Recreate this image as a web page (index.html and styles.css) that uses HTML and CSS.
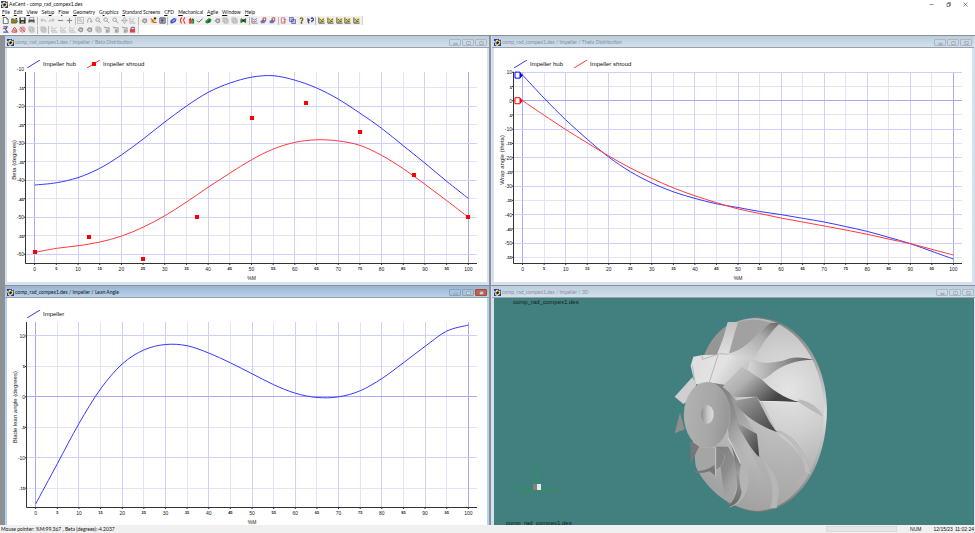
FILE: index.html
```html
<!DOCTYPE html>
<html lang="en">
<head>
<meta charset="utf-8">
<title>AxCent - comp_rad_compex1.des</title>
<link rel="stylesheet" href="styles.css">
</head>
<body>
<svg class="defs" aria-hidden="true">
  <symbol id="app" viewBox="0 0 16 16"><path fill="#2433b8" d="M0 0h16v16H0z"/><path fill="#f4e63a" d="M4 3l4-2 2 3 5 1-1 5-3 4-4-1-5 1 1-5z"/><path fill="#fff" d="M0 5h3v3H0zM12 0h3v3h-3zM5 14h4v2H5z"/><path fill="#111a50" d="M8 5l4 2-2 4-4 1-1-4z"/></symbol>
  <symbol id="new" viewBox="0 0 16 16"><path fill="#fff" stroke="#333" stroke-width="1.5" d="M3 1h7l4 4v10H3z"/><path fill="none" stroke="#333" d="M10 1v4h4"/></symbol>
  <symbol id="open" viewBox="0 0 16 16"><path fill="#8a8418" stroke="#333" d="M1 14V4h5l1 2h6v3h3l-4 5z"/><path fill="#333" d="M9 2h5v3h-2z"/></symbol>
  <symbol id="save" viewBox="0 0 16 16"><path fill="#2b2b22" d="M1 1h14v14H1z"/><path fill="#e8e8e0" d="M4 1h8v6H4z"/><path fill="#aaa" d="M5 10h6v5H5z"/></symbol>
  <symbol id="print" viewBox="0 0 16 16"><path fill="#fff" stroke="#444" d="M4 1h9v6H4z"/><path fill="#555" d="M1 6h14v7H1z"/><path fill="#ddd" d="M4 11h8v4H4z"/></symbol>
  <symbol id="undo" viewBox="0 0 16 16"><path fill="none" stroke="#aaa" stroke-width="2" d="M3 7h7q4 0 3 4M6 4L2 7l4 4"/></symbol>
  <symbol id="redo" viewBox="0 0 16 16"><path fill="none" stroke="#aaa" stroke-width="2" d="M13 7H6q-4 0-3 4M10 4l4 3-4 4"/></symbol>
  <symbol id="minus" viewBox="0 0 16 16"><path stroke="#888" stroke-width="2.5" d="M2 8h12"/></symbol>
  <symbol id="plus" viewBox="0 0 16 16"><path stroke="#888" stroke-width="2.5" d="M2 8h12M8 2v12"/></symbol>
  <symbol id="zoombox" viewBox="0 0 16 16"><g fill="none" stroke="#aaa" stroke-width="1.5"><path d="M1 1h14v14H1z"/><circle cx="7" cy="7" r="3"/><path d="M9 9l5 5"/></g></symbol>
  <symbol id="zoom" viewBox="0 0 16 16"><g fill="none" stroke="#999" stroke-width="2"><circle cx="6" cy="6" r="4"/><path d="M9 9l5 5"/></g></symbol>
  <symbol id="turn" viewBox="0 0 16 16"><path fill="none" stroke="#999" stroke-width="2" d="M4 13V7a4 4 0 018 0v4M9 9l3 3 3-3"/></symbol>
  <symbol id="move" viewBox="0 0 16 16"><path fill="none" stroke="#999" stroke-width="1.5" d="M8 1l5 7-5 7-5-7zM1 8h14"/></symbol>
  <symbol id="graph" viewBox="0 0 16 16"><path fill="none" stroke="#aaa" stroke-width="1.5" d="M2 1v13h13M4 4l4 3 5-4M4 10l8 1"/></symbol>
  <symbol id="geom" viewBox="0 0 16 16"><path fill="#999" d="M1 9l5-6 8 1v8l-6 3z"/><path fill="#ddd" d="M5 8l5-2 1 5H7z"/></symbol>
  <symbol id="tool" viewBox="0 0 16 16"><path fill="#e7b921" d="M1 10l9-9 5 3-9 10z"/><path fill="none" stroke="#c22" stroke-width="2" d="M2 3l7 10 6-1"/><path fill="#225" d="M9 1h5v4H9z"/></symbol>
  <symbol id="sheet" viewBox="0 0 16 16"><path fill="#d8d8e8" stroke="#446" stroke-width="2" d="M2 2h12v12H2z"/><path stroke="#335" stroke-width="1.5" d="M4 5h8M4 8h8M5 11h6M7 3v10"/></symbol>
  <symbol id="block" viewBox="0 0 16 16"><path fill="#3b56c9" d="M1 8l8-6 6 2-2 7-8 4-4-1z"/><path fill="#9fb0f0" d="M4 9l7-4 2 1-6 5z"/></symbol>
  <symbol id="blades" viewBox="0 0 16 16"><path fill="none" stroke="#e33" stroke-width="2.5" d="M7 1Q0 6 6 15M14 1Q7 6 14 15"/></symbol>
  <symbol id="pair" viewBox="0 0 16 16"><path fill="#d22" d="M2 6l4-5 2 5v9H2z"/><path fill="#187a28" d="M8 6l3-4 3 4v9H8z"/><path stroke="#fff" d="M4 8v5M11 8v5"/></symbol>
  <symbol id="check" viewBox="0 0 16 16"><path fill="none" stroke="#555" stroke-width="2" d="M2 8l4 4 9-8"/></symbol>
  <symbol id="green" viewBox="0 0 16 16"><path fill="#27953a" d="M1 9l8-7 6 3-2 7-8 3-4-2z"/><path fill="#1c5b2a" d="M6 9l6-4-1 6-5 3z"/></symbol>
  <symbol id="flow" viewBox="0 0 16 16"><path fill="#24803b" d="M1 4l6 2 7-4v12l-6-3-7 3z"/><path stroke="#b33" stroke-width="2" d="M3 3l10 9"/><path fill="#222" d="M6 6h4v4H6z"/></symbol>
  <symbol id="plot" viewBox="0 0 16 16"><path fill="none" stroke="#555" stroke-width="1.5" d="M2 1v13h13"/><path fill="none" stroke="#44c" stroke-width="1.5" d="M3 4l5 3 6-4"/><path fill="none" stroke="#c33" stroke-width="1.5" d="M3 10l6 1 5-3"/></symbol>
  <symbol id="rblue" viewBox="0 0 16 16"><path fill="#6878c4" d="M1 9l7-4 5 4-3 5H2z"/><path fill="none" stroke="#c33" stroke-width="2" d="M7 9V2h6v8"/></symbol>
  <symbol id="export" viewBox="0 0 16 16"><path fill="#fff" stroke="#b44" stroke-width="1.5" d="M3 2h8v12H3z"/><path stroke="#b44" stroke-width="1.5" d="M8 6h6M6 11h7"/></symbol>
  <symbol id="copy" viewBox="0 0 16 16"><path fill="#c5c5df" stroke="#449" stroke-width="1.5" d="M1 1h9v9H1zM6 6h9v9H6z"/></symbol>
  <symbol id="help" viewBox="0 0 16 16"><path fill="none" stroke="#786f00" stroke-width="3" d="M5 5q0-3 3-3t3 3-3 4v2"/><path fill="#333" d="M6 12h4v3H6z"/></symbol>
  <symbol id="what" viewBox="0 0 16 16"><path fill="#445" d="M1 1l7 7-4 1 2 5-3 1-2-5z"/><path fill="none" stroke="#229" stroke-width="2.5" d="M9 4q3-4 5 0t-3 5v3"/></symbol>
  <symbol id="view" viewBox="0 0 16 16"><path fill="#f4ea58" d="M1 2h14v13H1z"/><path fill="none" stroke="#448" stroke-width="2" d="M2 1v13h13M4 5l4 3 6-4M5 12l9-3"/></symbol>
  <symbol id="figure" viewBox="0 0 16 16"><path fill="none" stroke="#55b" stroke-width="2.5" d="M3 2h9L8 8l5 6H3"/><path stroke="#c33" stroke-width="2" d="M2 6h9"/></symbol>
  <symbol id="red" viewBox="0 0 16 16"><path fill="#eecaca" stroke="#d33" stroke-width="2" d="M2 12L8 3l5 6v5H3z"/><path stroke="#666" stroke-width="2" d="M6 9l6 3"/></symbol>
  <symbol id="ring" viewBox="0 0 16 16"><g fill="none" stroke="#c44" stroke-width="1.5"><circle cx="8" cy="8" r="6"/><circle cx="8" cy="8" r="3"/><path d="M2 2l12 12"/></g></symbol>
  <symbol id="grid" viewBox="0 0 16 16"><path fill="#ddd" stroke="#aaa" stroke-width="1.5" d="M2 2h9v9H2zM5 5h9v9H5z"/></symbol>
  <symbol id="wedge" viewBox="0 0 16 16"><path fill="#e2e2e2" stroke="#777" stroke-width="1.5" d="M2 2l5 2h7v10H6"/><path fill="#999" d="M7 8h5v5H7z"/></symbol>
  <symbol id="lock" viewBox="0 0 16 16"><path fill="none" stroke="#44a" stroke-width="2" d="M5 8V3h7v5"/><path fill="#d44" d="M2 7h12v8H2z"/></symbol>
</svg>

<div class="app">
  <header class="caption">
    <svg class="app-icon" aria-hidden="true"><use href="#app"/></svg>
    <h1>AxCent - comp_rad_compex1.des</h1>
    <div class="caption-buttons">
      <button aria-label="Minimize"><svg viewBox="0 0 10 10"><path d="M1 5h8"/></svg></button>
      <button aria-label="Restore"><svg viewBox="0 0 10 10"><path d="M2 3h5v6H2zM4 3V1h5v6H7"/></svg></button>
      <button aria-label="Close"><svg viewBox="0 0 10 10"><path d="M1 1l8 8M9 1L1 9"/></svg></button>
    </div>
  </header>

  <nav class="menu" aria-label="Main menu">
    <button><u>F</u>ile</button><button><u>E</u>dit</button><button><u>V</u>iew</button><button>Set<u>u</u>p</button><button>F<u>l</u>ow</button><button><u>G</u>eometry</button><button>G<u>r</u>aphics</button><button><u>S</u>tandard Screens</button><button><u>C</u>FD</button><button><u>M</u>echanical</button><button><u>A</u>gile</button><button><u>W</u>indow</button><button><u>H</u>elp</button>
  </nav>

  <div class="toolbar toolbar-main" role="toolbar" aria-label="Standard" data-icons="new open save print | undo redo minus plus | zoombox turn zoom zoom zoom move graph | geom tool sheet | block blades pair check green geom grid grid flow | plot rblue rblue | export copy help what | view view view view view"></div>
  <div class="toolbar toolbar-geometry" role="toolbar" aria-label="Geometry" data-icons="figure red ring grid | grid | graph graph graph geom geom grid wedge wedge wedge lock"></div>

  <main class="mdi">
    <section class="window">
      <header class="window-title">
        <svg class="app-icon" aria-hidden="true"><use href="#app"/></svg>
        <h2>comp_rad_compex1.des / Impeller / Beta Distribution</h2>
        <div class="window-buttons"></div>
      </header>
      <div class="window-body chart" data-chart="beta"></div>
    </section>

    <section class="window window-right">
      <header class="window-title">
        <svg class="app-icon" aria-hidden="true"><use href="#app"/></svg>
        <h2>comp_rad_compex1.des / Impeller / Theta Distribution</h2>
        <div class="window-buttons"></div>
      </header>
      <div class="window-body chart" data-chart="theta"></div>
    </section>

    <section class="window window-low window-active">
      <header class="window-title">
        <svg class="app-icon" aria-hidden="true"><use href="#app"/></svg>
        <h2>comp_rad_compex1.des / Impeller / Lean Angle</h2>
        <div class="window-buttons"></div>
      </header>
      <div class="window-body chart" data-chart="lean"></div>
    </section>

    <section class="window window-right window-low window-flush">
      <header class="window-title">
        <svg class="app-icon" aria-hidden="true"><use href="#app"/></svg>
        <h2>comp_rad_compex1.des / Impeller / 3D</h2>
        <div class="window-buttons"></div>
      </header>
      <div class="window-body scene">
        <svg viewBox="0 0 480 227" role="img" aria-label="Impeller model">
          <defs>
            <radialGradient id="disk" gradientUnits="userSpaceOnUse" cx="385" cy="270" r="370"><stop offset="0" stop-color="#e4e4e4"/><stop offset=".35" stop-color="#cfcfcf"/><stop offset=".7" stop-color="#b2b2b2"/><stop offset="1" stop-color="#a2a2a2"/></radialGradient>
            <linearGradient id="rim" x2="0" y2="1"><stop offset="0" stop-color="#7c7c7c"/><stop offset=".25" stop-color="#aaa"/><stop offset=".5" stop-color="#ddd"/><stop offset="1" stop-color="#777"/></linearGradient>
            <linearGradient id="nose" x2="1" y2=".2"><stop offset="0" stop-color="#b3b3b3"/><stop offset=".7" stop-color="#a6a6a6"/><stop offset="1" stop-color="#989898"/></linearGradient>
            <linearGradient id="bore"><stop offset="0" stop-color="#8c8c8c"/><stop offset=".55" stop-color="#c8c8c8"/><stop offset="1" stop-color="#dcdcdc"/></linearGradient>
            <linearGradient id="hub" x2="1" y2=".3"><stop offset="0" stop-color="#ddd"/><stop offset=".5" stop-color="#e3e3e3"/><stop offset="1" stop-color="#b9b9b9"/></linearGradient>
            <linearGradient id="bladeA" x2="0" y2="1"><stop offset="0" stop-color="#c2c2c2"/><stop offset="1" stop-color="#e0e0e0"/></linearGradient>
            <linearGradient id="bladeB" x1="1" x2="0" y2="1"><stop offset="0" stop-color="#666"/><stop offset=".35" stop-color="#aaa"/><stop offset="1" stop-color="#e2e2e2"/></linearGradient>
            <linearGradient id="bladeC"><stop offset="0" stop-color="#d6d6d6"/><stop offset=".5" stop-color="#989898"/><stop offset="1" stop-color="#555"/></linearGradient>
            <linearGradient id="bladeD" x2="1" y2=".5"><stop offset="0" stop-color="#cfcfcf"/><stop offset=".4" stop-color="#b0b0b0"/><stop offset=".9" stop-color="#444"/></linearGradient>
            <linearGradient id="bladeE" x2="1" y2="1"><stop offset="0" stop-color="#a5a5a5"/><stop offset=".9" stop-color="#484848"/></linearGradient>
            <linearGradient id="bladeG" x2="0" y2="1"><stop offset="0" stop-color="#555"/><stop offset=".5" stop-color="#9b9b9b"/><stop offset="1" stop-color="#666"/></linearGradient>
            <linearGradient id="shade" x2=".7" y2="1"><stop offset="0" stop-color="#7c7c7c"/><stop offset=".5" stop-color="#8d8d8d"/><stop offset="1" stop-color="#b0b0b0" stop-opacity="0"/></linearGradient>
          </defs>
          <text x="19" y="6">comp_rad_compex1.des</text>
          <text x="12" y="227">comp_rad_compex1.des</text>
          <g class="axes"><path d="M43 168v24M27 192h33"/><text x="23" y="192">X</text><text x="42" y="163">Y</text><text x="63" y="192">Z</text></g>
          <path fill="#857f7f" d="M39 186h4v6h-4z"/><path fill="#e9e9e9" d="M43 186h4v6h-4z"/>
          <g transform="translate(166 2) scale(.3333)">
            <path fill="url(#rim)" d="M290 52C412 54 500 180 501 330C499 505 410 635 290 636C215 630 140 570 108 500L92 350L128 180C150 115 200 58 290 52z"/>
            <path fill="url(#disk)" d="M285 54C406 60 491 185 492 330C490 500 405 630 290 633C215 628 140 570 108 500L92 350L128 180C150 115 200 58 285 54z"/>
            <path fill="#969696" d="M128 180Q148 112 202 76L185 130 170 168z"/>
            <path fill="#a1a1a1" d="M234 66Q285 52 332 68Q296 96 262 138Q245 156 208 160z"/>
            <path fill="url(#bladeA)" d="M203 66l31 0-12 36-16 60-36 4 20-52z"/>
            <path fill="url(#hub)" d="M92 197l8-27 28-5 42-1 36-3 74 18 30 10-5 50-58-38-54 52-48-5-40 5z"/>
            <path fill="none" stroke="#a2a2a2" stroke-width="2" d="M128 178l50-17 30 2M174 165l-26 82M97 197l9 55M127 166v12"/>
            <path fill="url(#bladeB)" d="M332 68l27 2c-32 32-58 70-79 110l-80-18c56-8 92-64 132-94z"/>
            <path fill="url(#bladeC)" d="M270 182c58 12 90 4 120-7 20-6 48-1 72 4-56 0-90 16-120 36q-20 19-38 24l-40-30z"/>
            <path fill="url(#shade)" d="M145 247l50 8 33 47 60 100 8 70-54 20-34-70-12-100z"/>
            <path fill="#aaa" d="M200 250l30 50 70-10 50 105c20 30 80 50 85 125L340 600 240 380z" opacity=".45"/>
            <path fill="url(#bladeD)" d="M245 200l-57 61 38 31 64-2 10 13c50 0 90 3 122 4-52-12-88-40-116-68z"/>
            <path fill="none" stroke="#eee" stroke-width="2" d="M300 304q90 2 122 4"/>
            <path fill="url(#bladeE)" d="M220 303l70-13c20 36 36 80 62 107-45-16-100-46-132-94z"/>
            <path fill="url(#bladeE)" d="M226 366l65 36 7 70c-26-24-50-72-72-106z"/>
            <path fill="url(#shade)" d="M166 440l38 0 34 60-8 60-20 60C180 570 190 490 166 440z"/>
            <path fill="#b4b4b4" d="M204 414c36 34 62 66 62 118 0 46-20 80-58 91 22-48 30-96 34-132z"/>
            <path fill="url(#bladeG)" d="M206 418l37 74c-10 36-2 66 2 84-4 20-12 38-42 46 22-26 32-52 28-80-8-40 2-60-25-124z"/>
            <path fill="none" stroke="#ddd" stroke-width="3" d="M205 415l37 76"/>
            <path fill="#bababa" stroke="#a7a7a7" d="M418 299c32 6 60 26 70 50-24-14-46-26-70-42z"/>
            <path fill="#bdbdbd" stroke="#a7a7a7" d="M352 391c52 14 88 70 100 132l-18-6c-2-50-30-94-82-122z"/>
            <path fill="#b6b6b6" stroke="#a4a4a4" d="M297 468c36 24 62 66 61 112l-8 44-20 1c18-56-4-110-33-157z"/>
            <path fill="#a5a5a5" d="M104 438q60 0 90 20c6 34-20 58-66 60-14-18-24-40-24-80z"/>
            <path fill="#858585" d="M166 438l28 18q2 38-28 54z"/>
            <path fill="#cfcfcf" d="M44 290l53-58 12 20-10 40-29 20z"/>
            <path fill="#8e8e8e" d="M44 400l16-62 14 50z"/>
            <path fill="#777" d="M91 424l27 14-26 54z"/>
            <path fill="#777" d="M97 515q44-2 66-20l4 33-18-14q-28 10-52 1z"/>
            <path stroke="#c9c9c9" stroke-width="3" d="M167 440v88"/>
            <ellipse cx="141" cy="345" rx="69" ry="99" fill="url(#nose)" stroke="#bbb" stroke-width="1"/>
            <ellipse cx="142" cy="343" rx="19" ry="28" fill="url(#bore)"/>
          </g>
        </svg>
      </div>
    </section>
  </main>

  <footer class="status">
    <span class="status-message">Mouse pointer: %M:99.367 , Beta (degrees):-4.2037</span>
    <span class="status-progress"></span>
    <span class="status-num">NUM</span>
    <span>12/15/23</span>
    <span>11:02:24</span>
  </footer>
</div>
<script src="app.js"></script>
</body>
</html>
```
FILE: styles.css
```css
* { box-sizing: border-box; }

body {
  margin: 0;
  font: 5px/7px Lato, "Liberation Sans", sans-serif;
  color: #111;
  background: #fff;
}

h1, h2 { margin: 0; font-size: inherit; font-weight: normal; white-space: nowrap; }

button {
  padding: 0;
  border: 0;
  background: none;
  font: inherit;
  color: inherit;
}

.defs { position: absolute; width: 0; height: 0; }

.app {
  display: flex;
  flex-direction: column;
  height: 100vh;
}

.app-icon { flex: none; width: 7px; height: 7px; }

.caption {
  display: flex;
  align-items: center;
  gap: 1px;
  height: 9px;
  padding-left: 1px;
}

.caption-buttons { display: flex; gap: 12px; margin-left: auto; padding-right: 7px; }
.caption-buttons button { display: flex; }
.caption-buttons svg { width: 5px; height: 5px; fill: none; stroke: #222; stroke-width: 1; }

.menu {
  display: flex;
  gap: 4px;
  height: 7px;
  padding-left: 2px;
  white-space: nowrap;
}

.toolbar {
  display: flex;
  align-items: center;
  height: 9px;
  padding: 0 1px;
  background: #f0f0f0;
  border-right: 1px solid #d5d5d5;
}

.toolbar-main { width: 363px; }
.toolbar-geometry { width: 139px; }
.toolbar button { display: flex; flex: 1; justify-content: center; }
.toolbar svg { width: 7px; height: 7px; }
.toolbar hr { width: 1px; height: 8px; margin: 0 1px; border: 0; background: #bbb; }

.mdi {
  display: grid;
  flex: 1;
  min-height: 0;
  grid-template: minmax(0, 249fr) minmax(0, 239fr) / minmax(0, 1fr) minmax(0, 1fr);
  gap: 1px 2px;
  margin-top: 1px;
  padding: 1px 0 0 5px;
  background: #8c9196;
}

.window {
  display: flex;
  flex-direction: column;
  min-height: 0;
  padding: 0 2px 3px;
  background: #d5e1ee;
}

.window-right { padding: 0 3px 3px; }
.window-low { padding-bottom: 0; }
.window-flush { padding-right: 1px; }
.window-active { background: #b7d3eb; }

.window-title {
  display: flex;
  align-items: center;
  gap: 1px;
  height: 12px;
  margin: 0 -2px;
  padding: 2px 2px 0;
  color: #87919b;
  background: linear-gradient(#bdccda, #d2e1f0);
  border-bottom: 1px solid #9ba1a8;
}

.window-active .window-title {
  color: #0c1622;
  background: linear-gradient(#9ab5d1, #b9d2eb);
}

.window-buttons { display: flex; gap: 1px; margin-left: auto; }

.window-buttons button {
  display: flex;
  align-items: center;
  justify-content: center;
  width: 12px;
  height: 7px;
  border: 1px solid #a9b7c7;
  border-radius: 1px;
  background: #cbd8e5;
}

.window-buttons svg { width: 5px; height: 4px; fill: #eee; stroke: #7c8792; }
.window-active .window-buttons button { background: #a9c3de; border-color: #8aa3bd; }
.window-active .window-buttons button:last-child { background: #cb5a48; border-color: #a34a40; }

.window-body { flex: 1; min-height: 0; overflow: hidden; background: #fff; }

.chart { display: flex; flex-direction: column; font-family: "Liberation Sans", Arial, sans-serif; }
.chart svg.plot { flex: 1; min-height: 0; width: 100%; overflow: visible; }

.legend {
  display: flex;
  gap: 11px;
  height: 22px;
  margin: 0;
  padding: 9px 0 0 20px;
  list-style: none;
  font-size: 6px;
  line-height: 12px;
}

.legend li { display: flex; align-items: center; gap: 3px; }
.legend svg { width: 13px; height: 8px; }

.plot text { fill: #222; font-size: 5px; text-anchor: middle; }
.plot .value { text-anchor: end; }
.plot .small { font-size: 4px; font-weight: bold; }
.plot .axis-name { font-size: 6px; }
.plot .unit { font-size: 5px; }
.plot .axis { stroke: #333; stroke-width: 1; fill: none; }
.plot .minor { stroke: #e3e3f7; }
.plot .major { stroke: #cfcffd; }
.plot .edge { stroke: #a9a9f8; }
.curve { fill: none; stroke-width: 1; }
.hub { stroke: #3838ff; }
.shroud { stroke: #ff3a3a; }
.point { fill: #f00; }

.scene { background: #42807f; font-family: "Liberation Sans", Arial, sans-serif; }
.scene > svg { display: block; width: 100%; height: 100%; }
.scene text { font-size: 6px; fill: #0d1c1c; }
.scene .axes path { stroke: #22a043; fill: none; }
.scene .axes text { fill: #22a043; }

.status {
  display: flex;
  align-items: center;
  gap: 2px;
  height: 8px;
  padding: 0 1px;
  background: #f0f0f0;
  font-family: "Liberation Sans", Arial, sans-serif;
  white-space: nowrap;
}

.status-message { flex: 1; font-family: Lato, sans-serif; }
.status-progress { width: 71px; height: 6px; background: #e5e5e5; border: 1px solid #d9d9d9; }
.status-num { padding: 0 10px 0 11px; }
```
FILE: app.js
```js
const charts = {
  beta: {
    y: [-62.35, -10.8], yName: "Beta (degrees)", left: 19, bottom: 19, extra: [-10],
    series: [
      { name: "Impeller hub", cls: "hub", points: [[0,-41.3],[5,-40.7],[10,-39.3],[15,-36.8],[20,-33.2],[25,-28.9],[30,-24.3],[35,-20],[40,-16.3],[45,-13.8],[50,-12.2],[55,-11.8],[60,-13],[65,-15.1],[70,-18.1],[75,-21.9],[80,-26],[85,-30.7],[90,-35.4],[95,-40.3],[100,-44.9]] },
      { name: "Impeller shroud", cls: "shroud", marked: true, points: [[0,-59.5],[5,-58.4],[10,-57.7],[15,-56.7],[20,-55.1],[25,-52.7],[30,-49.6],[35,-45.9],[40,-41.9],[45,-38.1],[50,-34.5],[55,-31.6],[60,-29.8],[65,-29.1],[70,-29.4],[75,-30.6],[80,-33.3],[85,-36.9],[90,-41.1],[95,-45.5],[100,-50]] }
    ],
    controls: [[0,-59.5],[12.5,-55.3],[25,-61.4],[37.5,-50],[50,-23.1],[62.5,-19.2],[75,-27],[87.5,-38.6],[100,-50]]
  },
  theta: {
    y: [-57, 10.1], yName: "Wrap angle (theta)", left: 20, bottom: 19,
    series: [
      { name: "Impeller hub", cls: "hub", points: [[0,9],[5,.9],[10,-6.7],[15,-13.5],[20,-19.8],[25,-24.9],[30,-28.9],[35,-32],[40,-34.3],[45,-36.2],[50,-37.5],[55,-38.9],[60,-40],[65,-41.3],[70,-42.6],[75,-44.2],[80,-45.9],[85,-48],[90,-50.2],[95,-52.9],[100,-55.6]] },
      { name: "Impeller shroud", cls: "shroud", points: [[0,0],[5,-5.1],[10,-10.1],[15,-14.8],[20,-19.4],[25,-23.6],[30,-27.3],[35,-30.6],[40,-33.4],[45,-35.8],[50,-38],[55,-39.6],[60,-41.2],[65,-42.6],[70,-44],[75,-45.4],[80,-46.9],[85,-48.6],[90,-50.2],[95,-52.2],[100,-54.2]] }
    ],
    handles: [[9, "#00f"], [0, "#f00"]]
  },
  lean: {
    y: [-18.1, 12.3], yName: "Blade lean angle (degrees)", left: 20, bottom: 18,
    series: [
      { name: "Impeller", cls: "hub", points: [[0,-17.6],[5,-11],[10,-4.4],[15,1.3],[20,5.4],[25,7.7],[30,8.6],[35,8.4],[40,7.2],[45,5.6],[50,3.8],[55,2],[60,.6],[65,-.1],[70,0],[75,1],[80,3],[85,5.6],[90,8.3],[95,10.8],[100,11.8]] }
    ]
  }
};

// Smooth path through the points (Catmull-Rom converted to cubic segments).
function smooth(p) {
  let d = `M${p[0]}`;
  for (let i = 0; i < p.length - 1; i++) {
    const a = p[i - 1] || p[i], b = p[i], c = p[i + 1], e = p[i + 2] || c;
    d += `C${b[0] + (c[0] - a[0]) / 6} ${b[1] + (c[1] - a[1]) / 6} ${c[0] - (e[0] - b[0]) / 6} ${c[1] - (e[1] - b[1]) / 6} ${c}`;
  }
  return d;
}

function legend(chart) {
  return `<ul class="legend">${chart.series.map(s => `<li><svg viewBox="0 0 13 8" aria-hidden="true"><path class="curve ${s.cls}" d="M0 8L13 0"/>${s.marked ? '<path class="point" d="M5 2h4v4H5z"/>' : ""}</svg>${s.name}</li>`).join("")}</ul>`;
}

function plot(chart, svg) {
  const box = svg.getBoundingClientRect();
  const left = chart.left, right = box.width - 10, top = 2, bottom = box.height - chart.bottom;
  const [lo, hi] = chart.y;
  const X = v => left + (v + 2) / 104 * (right - left);
  const Y = v => bottom - (v - lo) / (hi - lo) * (bottom - top);
  const snap = v => Math.floor(v) + 0.5;
  let minor = "", major = "", labels = "", ticks = "";

  for (let v = 0; v <= 100; v += 5) {
    const big = v % 10 === 0;
    const line = `<path class="${v === 0 || v === 100 ? "edge" : big ? "major" : "minor"}" d="M${snap(X(v))} ${top}V${bottom}"/>`;
    if (big) major += line; else minor += line;
    labels += `<text class="${big ? "" : "small"}" x="${X(v)}" y="${bottom + (big ? 8 : 7)}">${v}</text>`;
  }
  for (let v = 0; v <= 100; v++) ticks += `M${X(v)} ${bottom}v${v % 5 ? 1 : 2}`;
  for (let v = Math.ceil(lo); v <= hi; v++) {
    ticks += `M${left} ${Y(v)}h${v % 5 ? -1 : -2}`;
    if (v % 5) continue;
    const big = v % 10 === 0;
    const line = `<path class="${v === 0 ? "edge" : big ? "major" : "minor"}" d="M${left} ${snap(Y(v))}H${right}"/>`;
    if (big) major += line; else minor += line;
    labels += `<text class="value ${big ? "" : "small"}" x="${left - 2}" y="${Y(v) + 2}">${v}</text>`;
  }
  (chart.extra || []).forEach(v => { labels += `<text class="value" x="${left - 2}" y="${Y(v) + 2}">${v}</text>`; });

  const curves = chart.series.map(s => `<path class="curve ${s.cls}" d="${smooth(s.points.map(([x, y]) => [X(x), Y(y)]))}"/>`).join("");
  const points = (chart.controls || []).map(([x, y]) => `<rect class="point" x="${Math.round(X(x)) - 2}" y="${Math.round(Y(y)) - 2}" width="4" height="4"/>`).join("");
  const handles = (chart.handles || []).map(([v, c]) => `<path fill="#fff" stroke="${c}" d="M${left + 1} ${Y(v) - 3}h5v6h-5z"/><path fill="${c}" d="M${left + 6} ${Y(v) - 3}l3 3-3 3z"/>`).join("");
  const nameY = top + (bottom - top) * 0.46;

  svg.innerHTML = minor + major + curves + points +
    `<path class="axis" d="M${snap(left - 1)} ${top}V${snap(bottom)}H${right}"/><path class="axis" d="${ticks}"/>` + handles + labels +
    `<text class="axis-name" transform="translate(${left - 10} ${nameY}) rotate(-90)">${chart.yName}</text>` +
    `<text class="unit" x="${(left + right) / 2}" y="${bottom + 17}">%M</text>`;
}

document.querySelectorAll(".chart").forEach(el => {
  const chart = charts[el.dataset.chart];
  el.innerHTML = legend(chart) + `<svg class="plot" role="img" aria-label="${chart.yName}"></svg>`;
  const svg = el.querySelector(".plot");
  plot(chart, svg);
  window.addEventListener("resize", () => plot(chart, svg));
});

document.querySelectorAll(".toolbar").forEach(bar => {
  bar.innerHTML = bar.dataset.icons.split(" ").map(name => name === "|"
    ? "<hr>"
    : `<button aria-label="${name}"><svg aria-hidden="true"><use href="#${name}"/></svg></button>`).join("");
});

document.querySelectorAll(".window-buttons").forEach(group => {
  group.innerHTML = [["Minimize", "M1 4h6v2H1z"], ["Maximize", "M1 1h6v5H1zM3 3h2"], ["Close", "M1 1h6v5H1zM2 2l4 3"]]
    .map(([label, d]) => `<button aria-label="${label}"><svg viewBox="0 0 8 7"><path d="${d}"/></svg></button>`).join("");
});
```
